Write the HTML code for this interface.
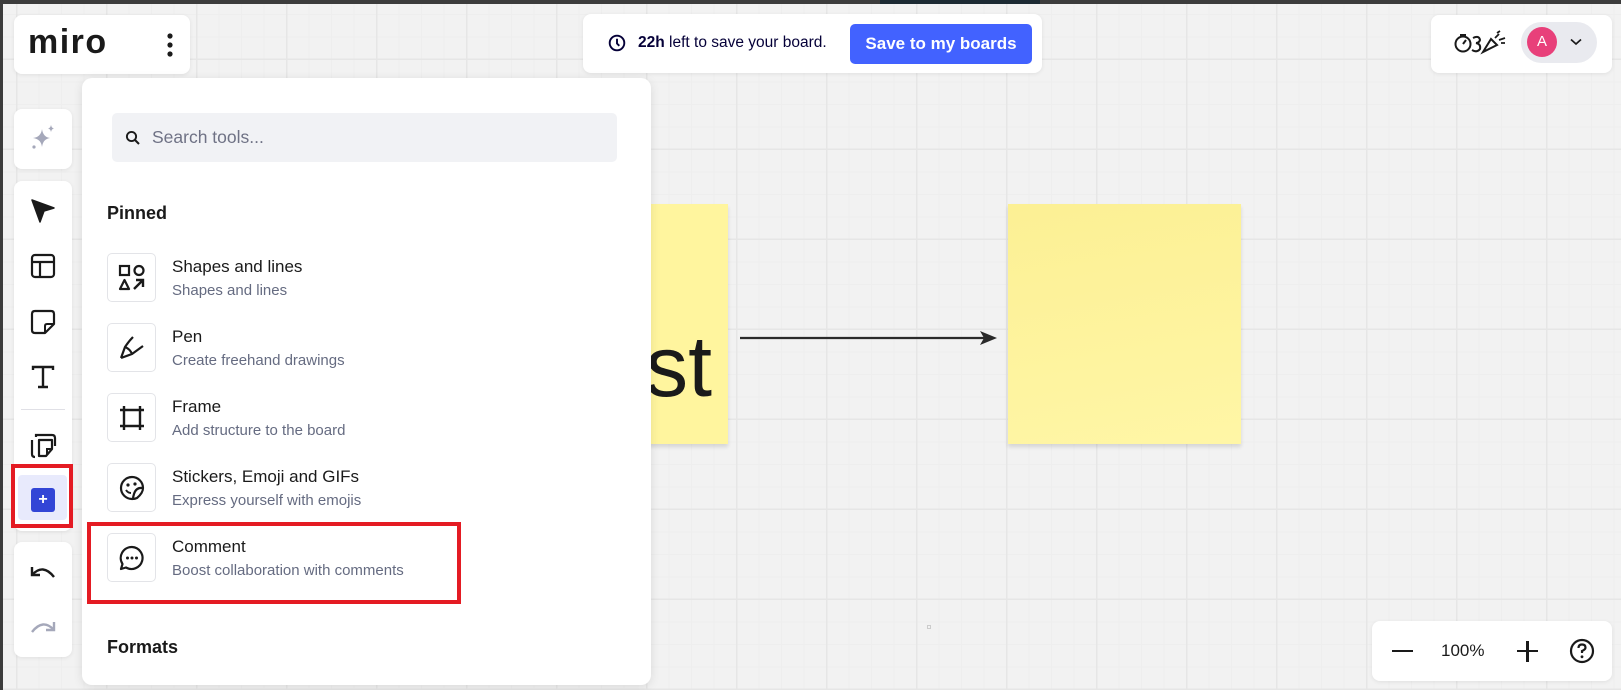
<!DOCTYPE html>
<html><head><meta charset="utf-8"><style>
*{margin:0;padding:0;box-sizing:border-box}
body{width:1621px;height:690px;overflow:hidden;position:relative;font-family:"Liberation Sans","DejaVu Sans",sans-serif;
background-color:#f2f2f2;
background-image:
linear-gradient(90deg,#e6e6e6 1.5px,transparent 1.5px),
linear-gradient(0deg,#e6e6e6 1.5px,transparent 1.5px),
linear-gradient(90deg,#eeeeee 1px,transparent 1px),
linear-gradient(0deg,#eeeeee 1px,transparent 1px);
background-size:90px 90px,90px 90px,22.5px 22.5px,22.5px 22.5px;
background-position:16px 0,0 60px,16px 0,0 60px;}
.abs{position:absolute}
.card{position:absolute;background:#fff;border-radius:8px;box-shadow:0 1px 4px rgba(0,0,0,.08)}
.ib{position:absolute;left:107px;width:49px;height:49px;border:1px solid #e3e4e8;border-radius:5px;display:flex;align-items:center;justify-content:center}
.t{position:absolute;left:172px;font-size:17px;color:#1a1a1a}
.s{position:absolute;left:172px;font-size:15px;color:#656b81}
</style></head><body>
<div class="abs" style="left:0;top:0;width:1621px;height:4px;background:#3c3c3c"></div>
<div class="abs" style="left:880px;top:0;width:160px;height:4px;background:#1c2a33"></div>
<div class="abs" style="left:0;top:0;width:3px;height:690px;background:#3c3c3c"></div>

<!-- logo -->
<div class="card" style="left:14px;top:15px;width:176px;height:59px">
<div class="abs" style="left:14px;top:8px;font-size:34px;font-weight:bold;color:#1a1a1a;letter-spacing:1.5px">miro</div>
<svg class="abs" style="left:152px;top:17px" width="8" height="26"><circle cx="4" cy="4" r="2.6" fill="#1a1a1a"/><circle cx="4" cy="13" r="2.6" fill="#1a1a1a"/><circle cx="4" cy="22" r="2.6" fill="#1a1a1a"/></svg>
</div>

<!-- banner -->
<div class="card" style="left:583px;top:14px;width:459px;height:59px">
<svg class="abs" style="left:25px;top:20px" width="18" height="18" viewBox="0 0 18 18"><circle cx="9" cy="9" r="7.3" fill="none" stroke="#050038" stroke-width="1.9"/><path d="M9 4.8V9.5L11.3 11.8" fill="none" stroke="#050038" stroke-width="1.9"/></svg>
<div class="abs" style="left:55px;top:20px;font-size:15.5px;color:#050038"><b>22h</b> left to save your board.</div>
<div class="abs" style="left:267px;top:10px;width:182px;height:40px;background:#4262ff;border-radius:5px;color:#fff;font-weight:bold;font-size:17px;line-height:40px;text-align:center">Save to my boards</div>
</div>

<!-- right top -->
<div class="card" style="left:1431px;top:15px;width:181px;height:58px">
<svg class="abs" style="left:22px;top:15px" width="56" height="26" viewBox="0 0 56 26"><circle cx="10" cy="14" r="7.5" fill="none" stroke="#1a1a1a" stroke-width="2"/><path d="M10 14L13 10M7 5H13" stroke="#1a1a1a" stroke-width="2" fill="none"/><path d="M20 8Q26 5 27 10Q26 13 23 13Q28 14 27 19Q24 23 19 20" fill="none" stroke="#1a1a1a" stroke-width="2"/><path d="M30 22L38 9L44 15Z" fill="none" stroke="#1a1a1a" stroke-width="2"/><path d="M42 8L46 4M46 10L52 8M44 3L47 1M48 13L52 13" stroke="#1a1a1a" stroke-width="1.8"/></svg>
<div class="abs" style="left:90px;top:7px;width:76px;height:41px;background:#e9eaef;border-radius:21px"></div>
<div class="abs" style="left:96px;top:12px;width:30px;height:30px;background:#e8407a;border-radius:50%;color:#fff;font-size:15px;line-height:30px;text-align:center">A</div>
<svg class="abs" style="left:139px;top:23px" width="12" height="8"><path d="M1 1.5L6 6L11 1.5" fill="none" stroke="#1a1a1a" stroke-width="1.7"/></svg>
</div>

<!-- left toolbar -->
<div class="card" style="left:14px;top:109px;width:58px;height:60px">
<svg class="abs" style="left:15px;top:14px" width="28" height="28" viewBox="0 0 28 28"><path d="M13 6Q14 14 21 15Q14 16 13 24Q12 16 4 15Q12 14 13 6Z" fill="#a5a8ba"/><path d="M22 2Q22.5 5 25 5.5Q22.5 6 22 9Q21.5 6 19 5.5Q21.5 5 22 2Z" fill="#a5a8ba"/><circle cx="5" cy="24" r="1.6" fill="#a5a8ba"/></svg>
</div>
<div class="card" style="left:14px;top:181px;width:58px;height:350px">
<svg class="abs" style="left:16px;top:17px" width="26" height="26" viewBox="0 0 26 26"><path d="M2 2L24 10L14 13L10 24Z" fill="#1a1a1a" stroke="#1a1a1a" stroke-width="1.5" stroke-linejoin="round"/></svg>
<svg class="abs" style="left:16px;top:72px" width="26" height="26" viewBox="0 0 26 26"><rect x="2" y="2" width="22" height="22" rx="3" fill="none" stroke="#1a1a1a" stroke-width="2.2"/><path d="M2 9H24M10 9V24" stroke="#1a1a1a" stroke-width="2.2"/></svg>
<svg class="abs" style="left:16px;top:128px" width="26" height="26" viewBox="0 0 26 26"><path d="M5 2H21Q24 2 24 5V15L15 24H5Q2 24 2 21V5Q2 2 5 2Z" fill="none" stroke="#1a1a1a" stroke-width="2.2" stroke-linejoin="round"/><path d="M24 15H17Q15 15 15 17V24" fill="none" stroke="#1a1a1a" stroke-width="2"/></svg>
<svg class="abs" style="left:16px;top:183px" width="26" height="26" viewBox="0 0 26 26"><path d="M3 6V3H23V6M13 3V23M8 23H18" fill="none" stroke="#1a1a1a" stroke-width="2.4"/></svg>
<div class="abs" style="left:7px;top:228px;width:44px;height:1px;background:#e0e0e6"></div>
<svg class="abs" style="left:16px;top:251px" width="27" height="27" viewBox="0 0 27 27"><path d="M6 5V3H22Q25 3 25 6V14" fill="none" stroke="#1a1a1a" stroke-width="2.2"/><path d="M2 8V22Q2 25 5 25" fill="none" stroke="#1a1a1a" stroke-width="2.2"/><path d="M9 8H22V17L16 24H9Z" fill="none" stroke="#1a1a1a" stroke-width="2.2" stroke-linejoin="round"/><path d="M22 17H17V23" fill="none" stroke="#1a1a1a" stroke-width="2"/></svg>
<div class="abs" style="left:4px;top:294px;width:49px;height:45px;background:#e8eafc;border-radius:4px"></div>
<div class="abs" style="left:17px;top:307px;width:24px;height:24px;background:#3245d6;border-radius:3px;color:#fff;font-weight:bold;font-size:16px;line-height:24px;text-align:center">+</div>
</div>
<div class="abs" style="left:11px;top:464px;width:62px;height:64px;border:4px solid #e41b23"></div>
<div class="card" style="left:14px;top:542px;width:58px;height:115px">
<svg class="abs" style="left:15px;top:20px" width="28" height="20" viewBox="0 0 28 20"><path d="M3 5V13H11" fill="none" stroke="#1a1a1a" stroke-width="2.4"/><path d="M3 13Q14 1 25 15" fill="none" stroke="#1a1a1a" stroke-width="2.4"/></svg>
<svg class="abs" style="left:15px;top:75px" width="28" height="20" viewBox="0 0 28 20"><path d="M25 5V13H17" fill="none" stroke="#a5a8ba" stroke-width="2.4"/><path d="M25 13Q14 1 3 15" fill="none" stroke="#a5a8ba" stroke-width="2.4"/></svg>
</div>

<!-- stickies -->
<div class="abs" style="left:640px;top:204px;width:88px;height:240px;background:#fff59e;box-shadow:0 3px 4px rgba(0,0,0,.12)"></div>
<div class="abs" style="left:600px;top:318px;width:112px;text-align:right;font-size:86px;color:#1a1a1a;font-family:'Liberation Sans',sans-serif">st</div>
<div class="abs" style="left:1008px;top:204px;width:233px;height:240px;background:linear-gradient(170deg,#fcf094,#fff6a6);box-shadow:0 3px 4px rgba(0,0,0,.12)"></div>
<svg class="abs" style="left:738px;top:328px" width="262" height="20"><path d="M2 10H250" stroke="#2a2a2a" stroke-width="2.2"/><path d="M242 3L259 10L242 17L246 10Z" fill="#2a2a2a"/></svg>
<div class="abs" style="left:927px;top:625px;width:4px;height:4px;border:1px solid #ccc"></div>

<!-- panel -->
<div class="card" style="left:82px;top:78px;width:569px;height:607px;border-radius:10px;box-shadow:0 2px 10px rgba(0,0,0,.1)"></div>
<div class="abs" style="left:112px;top:113px;width:505px;height:49px;background:#f1f2f5;border-radius:5px">
<svg class="abs" style="left:13px;top:17px" width="16" height="16" viewBox="0 0 16 16"><circle cx="6.5" cy="6.5" r="4.6" fill="none" stroke="#1a1a1a" stroke-width="1.9"/><path d="M10 10L14 14" stroke="#1a1a1a" stroke-width="2"/></svg>
<div class="abs" style="left:40px;top:14px;font-size:17.5px;color:#6f7285">Search tools...</div>
</div>
<div class="abs" style="left:107px;top:203px;font-size:18px;font-weight:bold;color:#1a1a1a">Pinned</div>

<div class="ib" style="top:253px"><svg width="28" height="28" viewBox="0 0 28 28"><rect x="2" y="2" width="9" height="9" fill="none" stroke="#1a1a1a" stroke-width="2.2"/><circle cx="21" cy="6.5" r="4.5" fill="none" stroke="#1a1a1a" stroke-width="2.2"/><path d="M6.5 16L11 25H2Z" fill="none" stroke="#1a1a1a" stroke-width="2.2" stroke-linejoin="round"/><path d="M16 25L25 16M18 16H25V23" fill="none" stroke="#1a1a1a" stroke-width="2.4"/></svg></div>
<div class="t" style="top:257px">Shapes and lines</div><div class="s" style="top:282px">Shapes and lines</div>

<div class="ib" style="top:323px"><svg width="28" height="28" viewBox="0 0 28 28"><path d="M3 24L14 20L25 12M3 24L7 13Q11 7 15 3M3 24L14 20Q12 15 7 13" fill="none" stroke="#1a1a1a" stroke-width="2.2" stroke-linejoin="round"/></svg></div>
<div class="t" style="top:327px">Pen</div><div class="s" style="top:352px">Create freehand drawings</div>

<div class="ib" style="top:393px"><svg width="28" height="28" viewBox="0 0 28 28"><path d="M6 2V26M22 2V26M2 6H26M2 22H26" stroke="#1a1a1a" stroke-width="2.4"/></svg></div>
<div class="t" style="top:397px">Frame</div><div class="s" style="top:422px">Add structure to the board</div>

<div class="ib" style="top:463px"><svg width="28" height="28" viewBox="0 0 28 28"><path d="M14 25A11 11 0 1 1 25 14Q25 19 19 24Q17 25 14 25Z" fill="none" stroke="#1a1a1a" stroke-width="2.2"/><path d="M25 14Q18 13 16 20Q15 23 15 25" fill="none" stroke="#1a1a1a" stroke-width="2.2"/><circle cx="10" cy="11" r="1.6" fill="#1a1a1a"/><circle cx="17" cy="10" r="1.6" fill="#1a1a1a"/><path d="M8 16Q10 19 13 19" fill="none" stroke="#1a1a1a" stroke-width="2"/></svg></div>
<div class="t" style="top:467px">Stickers, Emoji and GIFs</div><div class="s" style="top:492px">Express yourself with emojis</div>

<div class="ib" style="top:533px"><svg width="28" height="28" viewBox="0 0 28 28"><path d="M14 3A11 11 0 1 1 8 23.5L3 25L4.5 20A11 11 0 0 1 14 3Z" fill="none" stroke="#1a1a1a" stroke-width="2.2" stroke-linejoin="round"/><circle cx="9.5" cy="14" r="1.5" fill="#1a1a1a"/><circle cx="14" cy="14" r="1.5" fill="#1a1a1a"/><circle cx="18.5" cy="14" r="1.5" fill="#1a1a1a"/></svg></div>
<div class="t" style="top:537px">Comment</div><div class="s" style="top:562px">Boost collaboration with comments</div>
<div class="abs" style="left:87px;top:522px;width:374px;height:82px;border:4px solid #e41b23"></div>

<div class="abs" style="left:107px;top:637px;font-size:18px;font-weight:bold;color:#1a1a1a">Formats</div>

<!-- zoom -->
<div class="card" style="left:1372px;top:621px;width:240px;height:60px">
<div class="abs" style="left:20px;top:29px;width:21px;height:2.4px;background:#1a1a1a"></div>
<div class="abs" style="left:69px;top:20px;font-size:17px;color:#1a1a1a">100%</div>
<div class="abs" style="left:145px;top:29px;width:21px;height:2.4px;background:#1a1a1a"></div>
<div class="abs" style="left:154.3px;top:20px;width:2.4px;height:21px;background:#1a1a1a"></div>
<svg class="abs" style="left:197px;top:17px" width="26" height="26" viewBox="0 0 26 26"><circle cx="13" cy="13" r="11" fill="none" stroke="#1a1a1a" stroke-width="2.2"/><path d="M9.5 10Q9.5 6.5 13 6.5Q16.5 6.5 16.5 9.5Q16.5 11.5 13 13V15" fill="none" stroke="#1a1a1a" stroke-width="2.2"/><circle cx="13" cy="18.8" r="1.4" fill="#1a1a1a"/></svg>
</div>
</body></html>
